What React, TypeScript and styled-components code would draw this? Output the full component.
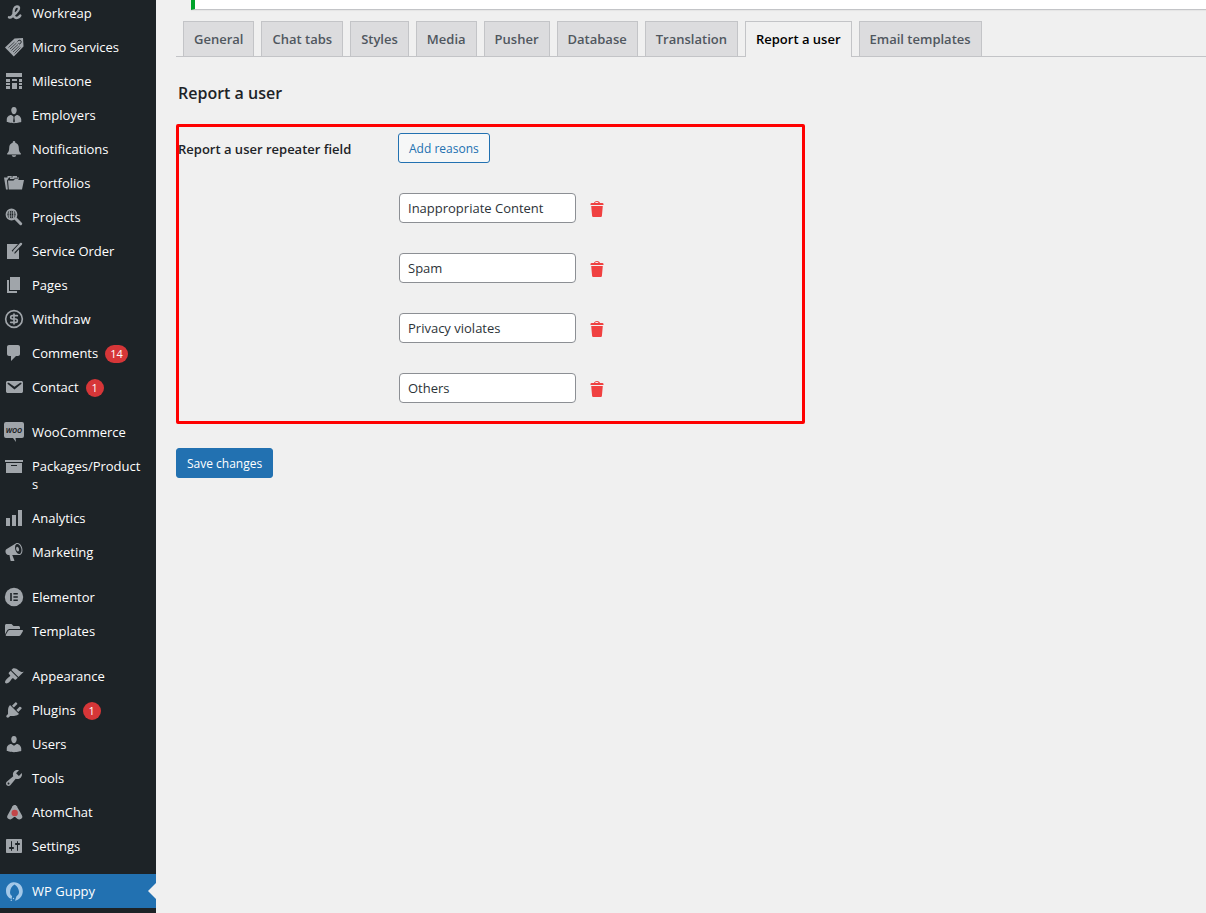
import React, { useState } from 'react';
import styled, { createGlobalStyle, css } from 'styled-components';
import { CircleDollarSign } from 'lucide-react';
import { FaFolderOpen } from 'react-icons/fa';

const GlobalStyle = createGlobalStyle`
  *, *::before, *::after { box-sizing: border-box; }
  body {
    margin: 0;
    background: #f0f0f0;
    color: #2c3338;
    font: 13px/18px "Open Sans", "Noto Sans", sans-serif;
  }
  button, input { font-family: inherit; }
`;

const Page = styled.div`
  display: flex;
  min-height: 100vh;
  overflow: hidden;
`;

const Sidebar = styled.nav`
  flex: 0 0 156px;
  background: #1d2327;
`;

const Menu = styled.ul`
  margin: -4px 0 0;
  padding: 0;
  list-style: none;
`;

const MenuItem = styled.li<{ $group?: boolean }>`
  margin-top: ${(p) => (p.$group ? '11px' : '0')};
`;

const MenuLink = styled.a<{ $current?: boolean }>`
  position: relative;
  display: flex;
  align-items: flex-start;
  gap: 8px;
  padding: 8px 12px 8px 4px;
  color: #fff;
  text-decoration: none;

  svg {
    flex: none;
    width: 20px;
    height: 20px;
    margin: -1px 0;
    color: #a0a5aa;
  }

  ${(p) =>
    p.$current &&
    css`
      background: #2271b1;

      svg { color: #a3c8e8; }

      &::after {
        content: '';
        position: absolute;
        top: 9px;
        right: 0;
        border: 8px solid transparent;
        border-left: 0;
        border-right-color: #f0f0f0;
      }
    `}
`;

const MenuText = styled.span`
  min-width: 0;
  overflow-wrap: anywhere;
`;

const Badge = styled.span`
  min-width: 18px;
  height: 18px;
  margin: 1px 0 -1px -1px;
  padding: 0 5px;
  border-radius: 9px;
  background: #d63638;
  color: #fff;
  font-size: 11px;
  line-height: 18px;
  text-align: center;
`;

const Main = styled.main`
  flex: 1;
  min-width: 0;
  padding-left: 20px;
`;

const Notice = styled.div`
  height: 10px;
  margin-left: 15px;
  border-left: 4px solid #00a32a;
  border-bottom: 1px solid #c3c4c7;
  background: #fff;
  box-shadow: 0 1px 1px rgba(0, 0, 0, 0.04);
`;

const Tabs = styled.nav`
  display: flex;
  gap: 7px;
  margin-top: 11px;
  padding-left: 7px;
  border-bottom: 1px solid #c3c4c7;
`;

const Tab = styled.a<{ $active?: boolean }>`
  padding: 5px 10px;
  border: 1px solid #c3c4c7;
  border-bottom: 0;
  background: ${(p) => (p.$active ? '#f0f0f0' : '#dcdcde')};
  margin-bottom: ${(p) => (p.$active ? '-1px' : '0')};
  color: ${(p) => (p.$active ? '#000' : '#50575e')};
  font-weight: 600;
  line-height: 24px;
  white-space: nowrap;
  text-decoration: none;
`;

const Title = styled.h2`
  margin: 24px 0 19px 2px;
  color: #1d2327;
  font-size: 16px;
  font-weight: 600;
  line-height: 24px;
`;

const ReasonsPanel = styled.section`
  position: relative;
  display: grid;
  grid-template-columns: 220px 1fr;
  max-width: 629px;
  padding: 9px 3px 21px 2px;

  &::after {
    content: '';
    position: absolute;
    inset: 0;
    border: 3px solid #fe0000;
    border-radius: 2px;
    pointer-events: none;
  }
`;

const PanelLabel = styled.h3`
  margin: 0;
  padding-top: 7px;
  color: #1d2327;
  font-size: 13px;
  font-weight: 600;
  line-height: 18px;
`;

const Button = styled.button<{ $primary?: boolean }>`
  display: block;
  height: 30px;
  padding: 2px 10px 0;
  border: 1px solid #2271b1;
  border-radius: 3px;
  background: ${(p) => (p.$primary ? '#2271b1' : '#f6f7f7')};
  color: ${(p) => (p.$primary ? '#fff' : '#2271b1')};
  font-size: 12px;
  line-height: 26px;
  cursor: pointer;
`;

const ReasonList = styled.ul`
  display: grid;
  gap: 30px;
  margin: 30px 0 0 1px;
  padding: 0;
  list-style: none;
`;

const ReasonRow = styled.li`
  display: flex;
  align-items: center;
  gap: 11px;
`;

const ReasonInput = styled.input`
  width: 177px;
  height: 30px;
  padding: 0 8px;
  border: 1px solid #8c8f94;
  border-radius: 4px;
  background: #fff;
  color: #2c3338;
  font-size: 13px;
`;

const RemoveButton = styled.button`
  display: flex;
  padding: 0;
  border: 0;
  background: none;
  color: #f04141;
  cursor: pointer;

  svg { width: 20px; height: 20px; margin-top: 1px; }
`;

const Actions = styled.div`
  margin-top: 24px;
`;

const Icon = ({ children }: { children: React.ReactNode }) => (
  <svg viewBox="0 0 20 20" fill="currentColor" aria-hidden="true">
    {children}
  </svg>
);

const DARK = '#1d2327';

const icons: Record<string, React.ReactNode> = {
  ribbon: (
    <Icon>
      <path d="M8.500 13C11 11 15.500 8 15 4.800C14.700 3 11.500 2.800 10.300 5.500C9.200 8 9 13 10.800 14.300C12.800 15.800 15 14.500 16.300 12.500M5 14.300C7 14.800 8.700 13 9.300 11.500" fill="none" stroke="currentColor" strokeWidth="2.400" strokeLinecap="round" />
    </Icon>
  ),
  tag: (
    <Icon>
      <path d="M1 10.500L10.500 1.500L19 1L19.500 9.500L9.800 19.500Z" />
      <path d="M4.500 10.500L10.500 5M6 12L12.500 6M7.500 13.500L14 7.500M9 15L15.500 9M10.500 16.500L16.500 10.500" stroke={DARK} strokeWidth="0.700" />
      <path d="M13.500 4.500C14.500 2.500 18 3 17 5.500C16.500 7 15 7.500 14.500 6.500" fill="none" stroke={DARK} strokeWidth="1" />
    </Icon>
  ),
  schedule: (
    <Icon>
      <path d="M2 2h16v4H2zM2 8h4v3H2zM8 8h5v2H8zM15 8h3v3h-3zM2 12h4v2H2zM8 12h5v6H8zM15 12h3v2h-3zM2 15h4v3H2zM15 15h3v3h-3z" />
    </Icon>
  ),
  businessman: (
    <Icon>
      <path d="M10 9.250c-2.270 0-2.730-3.440-2.730-3.440C7 4.020 7.820 2 9.970 2c2.160 0 2.980 2.020 2.710 3.810 0 0-.41 3.440-2.680 3.440zM7.230 10.050L10 11.800 12.720 10c2.390 0 4.520 2.330 4.520 4.530v2.490s-3.650 1.130-7.240 1.130-7.240-1.130-7.240-1.130v-2.490c0-2.250 1.940-4.480 4.470-4.480z" />
      <path d="M9.200 11.200h1.600l-.4 1.300.5 4-.9 1.200-.9-1.200.5-4z" fill={DARK} />
    </Icon>
  ),
  bell: (
    <Icon>
      <path d="M10 2c.8 0 1.300.6 1.300 1.300v.5c2.200.6 3.500 2.500 3.500 4.900 0 3 .7 4.600 2 5.500V15.500H3.200v-1.300c1.300-.9 2-2.500 2-5.500 0-2.400 1.300-4.300 3.500-4.900v-.5C8.700 2.600 9.200 2 10 2zM7.800 16.300h4.400c0 2.200-4.400 2.200-4.400 0z" />
    </Icon>
  ),
  folders: (
    <Icon>
      <path d="M0 4.500h3.500V3h4.200v1.500H5L3 7.500l.8 9H2z" />
      <path d="M6 6V4.500h2.500V3H13v1.500h2V6z" />
      <path d="M4 7.500h5.500L11 6h3l.8 1H20l-2 9.500H4.800z" />
      <path d="M4.800 6.700h4.400L10.600 5.300h4" fill="none" stroke={DARK} strokeWidth="0.700" />
    </Icon>
  ),
  search: (
    <Icon>
      <circle cx="7.500" cy="7.500" r="5" fill="none" stroke="currentColor" strokeWidth="1.800" />
      <ellipse cx="7.500" cy="7.500" rx="2.300" ry="4.800" fill="none" stroke="currentColor" strokeWidth="1.100" />
      <path d="M7.500 3v9M3 6h9M3 9h9" stroke="currentColor" strokeWidth="0.600" />
      <path d="M11.500 11.500L16.700 16.700" stroke="currentColor" strokeWidth="3" strokeLinecap="round" />
    </Icon>
  ),
  edit: (
    <Icon>
      <path d="M3 3h12v15H3z" />
      <path d="M9.300 11.200L17 3" stroke={DARK} strokeWidth="4.400" />
      <path d="M10.500 9.800L17 2.900" stroke="currentColor" strokeWidth="2.400" strokeLinecap="round" />
      <path d="M8.300 12.300l.8-2.800 2 1.900z" />
    </Icon>
  ),
  pages: (
    <Icon>
      <path d="M6 15V2h10v13H6zm-1 1h8v2H3V5h2v11z" />
    </Icon>
  ),
  money: <CircleDollarSign aria-hidden="true" />,
  comments: (
    <Icon>
      <path d="M5 2h9c1.100 0 2 .9 2 2v7c0 1.100-.9 2-2 2h-2l-5 5v-5H5c-1.100 0-2-.9-2-2V4c0-1.100.9-2 2-2z" />
    </Icon>
  ),
  email: (
    <Icon>
      <path d="M3.870 4h13.250C18.370 4 19 4.590 19 5.790v8.420c0 1.190-.63 1.790-1.880 1.790H3.870c-1.250 0-1.880-.6-1.880-1.790V5.790c0-1.200.63-1.790 1.880-1.790zm6.620 8.600l6.740-5.530c.24-.2.430-.66.130-1.070-.29-.41-.82-.42-1.170-.17l-5.700 3.860L4.800 5.830c-.35-.25-.88-.24-1.170.17-.3.410-.11.870.130 1.070z" />
    </Icon>
  ),
  woo: (
    <Icon>
      <path d="M2 0h16a2 2 0 0 1 2 2v12a2 2 0 0 1-2 2h-6.500l.5 4-3-4H2a2 2 0 0 1-2-2V2a2 2 0 0 1 2-2z" />
      <text x="10" y="11" textAnchor="middle" fill={DARK} fontFamily="Liberation Sans Narrow, Open Sans, sans-serif" fontSize="7" fontWeight="700" fontStyle="italic">WOO</text>
    </Icon>
  ),
  archive: (
    <Icon>
      <path d="M19 4v2H1V4h18zM2 7h16v10H2V7zm11 3V9H7v1h6z" />
    </Icon>
  ),
  chart: (
    <Icon>
      <path d="M18 18V2h-4v16h4zm-6 0V7H8v11h4zm-6 0v-8H2v8h4z" />
    </Icon>
  ),
  megaphone: (
    <Icon>
      <path d="M18.150 5.940c.46 1.620.38 3.220-.02 4.480-.42 1.280-1.260 2.180-2.300 2.480-.16.060-.26.060-.4.060-.06.020-.12.020-.18.020-.06.020-.14.020-.22.020h-6.800l2.220 5.500c.02.140-.06.260-.14.340-.08.100-.24.160-.34.160H6.950c-.1 0-.26-.06-.34-.16-.08-.08-.16-.2-.14-.34l-1-5.500H4.250l-.02-.02c-.5.060-1.080-.18-1.540-.62s-.88-1.080-1.060-1.880c-.24-.8-.2-1.560-.02-2.200.18-.62.58-1.080 1.060-1.300l.02-.02 9-5.400c.1-.06.18-.1.240-.16.060-.04.140-.08.240-.12.160-.08.280-.12.500-.18 1.040-.3 2.240.1 3.220.98s1.840 2.240 2.260 3.860zm-2.580 5.980h-.02c.4-.1.740-.34 1.040-.7.580-.7.860-1.760.86-3.040 0-.64-.1-1.300-.28-1.980-.34-1.360-1.020-2.500-1.780-3.240s-1.680-1.100-2.460-.88c-.82.220-1.400.96-1.700 2-.32 1.040-.28 2.360.06 3.720.38 1.360 1 2.500 1.800 3.240.78.740 1.620 1.100 2.480.88zm-2.540-7.080c.22-.04.420-.02.620.040.38.160.76.480 1.020 1s.42 1.200.42 1.780c0 .3-.04.560-.12.800-.18.480-.44.840-.86.940-.34.100-.8-.06-1.140-.4s-.64-.86-.78-1.500c-.18-.62-.12-1.240.02-1.720s.48-.84.820-.94z" />
    </Icon>
  ),
  elementor: (
    <Icon>
      <circle cx="10" cy="10" r="9.200" />
      <path d="M6.200 6h1.600v8H6.200zM9.400 6h4.400v1.600H9.400zM9.400 9.200h4.400v1.600H9.400zM9.400 12.400h4.400V14H9.400z" fill={DARK} />
    </Icon>
  ),
  folder: <FaFolderOpen aria-hidden="true" viewBox="-32 -32 640 640" />,
  brush: (
    <Icon>
      <path d="M14.480 11.060L7.410 3.990l1.500-1.500c.5-.56 2.300-.47 3.510.32 1.210.8 1.430 1.280 2.910 2.100 1.180.64 2.450 1.260 4.450.85zm-.71.710L6.700 4.700 4.930 6.470c-.39.390-.39 1.020 0 1.410l1.060 1.060c.39.390.39 1.030 0 1.420-.6.600-1.430 1.110-2.210 1.690-.35.260-.7.530-1.010.840C1.430 14.230.4 16.080 1.400 17.070c.99 1 2.840-.03 4.180-1.360.31-.31.580-.66.850-1.020.57-.78 1.080-1.610 1.690-2.210.39-.39 1.020-.39 1.410 0l1.060 1.060c.39.390 1.020.39 1.410 0z" />
    </Icon>
  ),
  plug: (
    <Icon>
      <path d="M13.110 4.360L9.870 7.600 8 5.730l3.240-3.240c.35-.34 1.050-.2 1.560.32.52.510.66 1.210.31 1.550zm-8 1.770l.91-1.120 9.010 9.010-1.190.84c-.71.710-2.630 1.160-3.820 1.160H6.140L4.900 17.260c-.59.590-1.540.59-2.120 0-.59-.58-.59-1.530 0-2.120l1.240-1.240v-3.880c0-1.130.4-3.190 1.090-3.890zm7.260 3.970l3.240-3.240c.34-.35 1.040-.21 1.550.31.52.510.66 1.210.31 1.550l-3.240 3.250z" />
    </Icon>
  ),
  user: (
    <Icon>
      <path d="M10 9.250c-2.270 0-2.730-3.440-2.730-3.440C7 4.020 7.820 2 9.970 2c2.160 0 2.980 2.020 2.710 3.810 0 0-.41 3.440-2.680 3.440zm0 2.570L12.720 10c2.390 0 4.520 2.330 4.520 4.530v2.490s-3.650 1.130-7.240 1.130c-3.650 0-7.240-1.130-7.240-1.130v-2.490c0-2.250 1.940-4.480 4.470-4.480z" />
    </Icon>
  ),
  wrench: (
    <Icon>
      <path fillRule="evenodd" d="M16.680 9.770c-1.340 1.340-3.300 1.670-4.950.99l-5.410 6.520c-.99.990-2.590.99-3.580 0s-.99-2.590 0-3.570l6.520-5.420c-.68-1.650-.35-3.610.99-4.950 1.280-1.280 3.120-1.620 4.720-1.060l-2.890 2.890 2.820 2.820 2.860-2.870c.53 1.580.18 3.390-1.080 4.650zM3.810 16.210c.4.390 1.040.39 1.430 0 .4-.4.400-1.040 0-1.430-.39-.4-1.030-.4-1.430 0-.39.390-.39 1.030 0 1.430z" />
    </Icon>
  ),
  atom: (
    <Icon>
      <path d="M10.700 6L6 14.500M10.700 6L15.500 14.500M6.500 14.500L10.700 11L15 14.500" fill="none" stroke="currentColor" strokeWidth="5.500" strokeLinecap="round" strokeLinejoin="round" />
      <path d="M8.500 18l2.200-3 2.200 3z" fill={DARK} />
      <circle cx="10.700" cy="11" r="3.200" fill="#c24548" />
    </Icon>
  ),
  sliders: (
    <Icon>
      <path d="M18 16V4c0-.55-.45-1-1-1H3c-.55 0-1 .45-1 1v12c0 .55.450 1 1 1h14c.55 0 1-.45 1-1zM8 11h1c.55 0 1 .45 1 1s-.45 1-1 1H8v1.500c0 .28-.22.500-.5.500s-.5-.22-.5-.5V13H6c-.55 0-1-.45-1-1s.45-1 1-1h1V5.500c0-.28.220-.5.500-.5s.5.220.5.500V11zm5-2h-1c-.55 0-1-.45-1-1s.45-1 1-1h1V5.500c0-.28.220-.5.500-.5s.5.220.5.500V7h1c.55 0 1 .45 1 1s-.45 1-1 1h-1v5.500c0 .28-.22.500-.5.500s-.5-.22-.5-.5V9z" />
    </Icon>
  ),
  guppy: (
    <Icon>
      <path d="M9.500 1.300C5 1.600 2 5.300 2 9.700c0 4.200 2.200 7.200 5.600 8.300l.5-3c-1.600-1-2.300-2.600-2-4.300C6.300 8 7.500 5.500 10.500 3.500c3 2 4.200 4.500 4.500 7 .2 2-.8 3.700-2.500 4.700L11 19.800c4.600-1 7.800-5 7.800-9.800C18.800 4.800 14.800 1 9.500 1.300z" />
      <circle cx="7.300" cy="19.200" r="0.800" />
      <circle cx="9.500" cy="17.500" r="0.700" />
    </Icon>
  ),
  trash: (
    <Icon>
      <path fillRule="evenodd" d="M12 4h3c.6 0 1.500.4 1.500 1v1h-13V5c0-.6.900-1 1.500-1h2c.2-1.100 1.800-2 3-2s2.800.9 3 2zM8 4h3.500c-.2-.6-.9-1-1.700-1S8.200 3.400 8 4zM4.200 7h11.600l-.9 10.100c0 .5-.4.900-1 .9H6.100c-.5 0-.9-.4-1-.9z" />
    </Icon>
  ),
};

interface Entry {
  label: string;
  icon: string;
  badge?: number;
  group?: boolean;
  current?: boolean;
}

const menu: Entry[] = [
  { label: 'Workreap', icon: 'ribbon' },
  { label: 'Micro Services', icon: 'tag' },
  { label: 'Milestone', icon: 'schedule' },
  { label: 'Employers', icon: 'businessman' },
  { label: 'Notifications', icon: 'bell' },
  { label: 'Portfolios', icon: 'folders' },
  { label: 'Projects', icon: 'search' },
  { label: 'Service Order', icon: 'edit' },
  { label: 'Pages', icon: 'pages' },
  { label: 'Withdraw', icon: 'money' },
  { label: 'Comments', icon: 'comments', badge: 14 },
  { label: 'Contact', icon: 'email', badge: 1 },
  { label: 'WooCommerce', icon: 'woo', group: true },
  { label: 'Packages/Products', icon: 'archive' },
  { label: 'Analytics', icon: 'chart' },
  { label: 'Marketing', icon: 'megaphone' },
  { label: 'Elementor', icon: 'elementor', group: true },
  { label: 'Templates', icon: 'folder' },
  { label: 'Appearance', icon: 'brush', group: true },
  { label: 'Plugins', icon: 'plug', badge: 1 },
  { label: 'Users', icon: 'user' },
  { label: 'Tools', icon: 'wrench' },
  { label: 'AtomChat', icon: 'atom' },
  { label: 'Settings', icon: 'sliders' },
  { label: 'WP Guppy', icon: 'guppy', group: true, current: true },
];

const tabs = ['General', 'Chat tabs', 'Styles', 'Media', 'Pusher', 'Database', 'Translation', 'Report a user', 'Email templates'];

export default function App() {
  const [reasons, setReasons] = useState(['Inappropriate Content', 'Spam', 'Privacy violates', 'Others']);

  return (
    <>
      <GlobalStyle />
      <Page>
        <Sidebar aria-label="Admin menu">
          <Menu>
            {menu.map((item) => (
              <MenuItem key={item.label} $group={item.group}>
                <MenuLink href="#" $current={item.current}>
                  {icons[item.icon]}
                  <MenuText>{item.label}</MenuText>
                  {item.badge && <Badge>{item.badge}</Badge>}
                </MenuLink>
              </MenuItem>
            ))}
          </Menu>
        </Sidebar>
        <Main>
          <Notice />
          <Tabs aria-label="Settings sections">
            {tabs.map((tab) => (
              <Tab key={tab} href="#" $active={tab === 'Report a user'}>
                {tab}
              </Tab>
            ))}
          </Tabs>
          <Title>Report a user</Title>
          <ReasonsPanel>
            <PanelLabel>Report a user repeater field</PanelLabel>
            <div>
              <Button type="button" onClick={() => setReasons([...reasons, ''])}>
                Add reasons
              </Button>
              <ReasonList>
                {reasons.map((reason, i) => (
                  <ReasonRow key={i}>
                    <ReasonInput
                      type="text"
                      aria-label={`Reason ${i + 1}`}
                      value={reason}
                      onChange={(e) => setReasons(reasons.map((r, j) => (j === i ? e.target.value : r)))}
                    />
                    <RemoveButton
                      type="button"
                      aria-label={`Remove reason ${i + 1}`}
                      onClick={() => setReasons(reasons.filter((_, j) => j !== i))}
                    >
                      {icons.trash}
                    </RemoveButton>
                  </ReasonRow>
                ))}
              </ReasonList>
            </div>
          </ReasonsPanel>
          <Actions>
            <Button type="submit" $primary>
              Save changes
            </Button>
          </Actions>
        </Main>
      </Page>
    </>
  );
}
